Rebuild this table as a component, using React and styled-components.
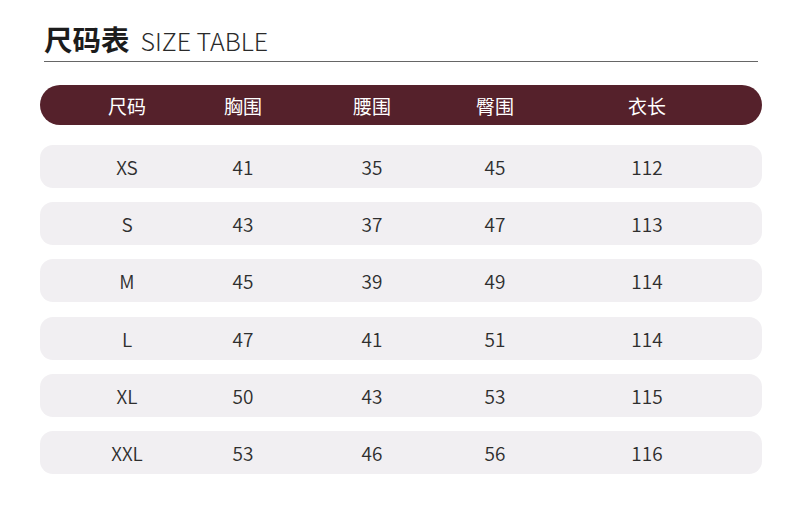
import React from "react";
import styled, { createGlobalStyle } from "styled-components";

const Global = createGlobalStyle`
  html, body { margin: 0; padding: 0; background: #ffffff; }
  body { font-family: "Noto Sans CJK SC", "Noto Sans", sans-serif; }
`;

const Page = styled.div`
  width: 790px;
  height: 516px;
  box-sizing: border-box;
  padding: 22px 28px 0 40px;
  display: flex;
  flex-direction: column;
`;

const TitleBar = styled.div`
  margin-left: 4px;
  margin-right: 4px;
  display: flex;
  align-items: baseline;
  gap: 11px;
  padding-bottom: 4px;
  border-bottom: 1px solid #666;
  line-height: 34px;
`;

const TitleCn = styled.span`
  font-size: 28.5px;
  font-weight: 700;
  color: #1c1c1c;
`;

const TitleEn = styled.span`
  font-size: 25px;
  font-weight: 300;
  color: #2a2a2a;
`;

const Grid = styled.div`
  display: grid;
  grid-template-columns: 146px 86px 172px 74px 1fr;
  align-items: center;
  justify-items: center;
  padding-left: 14px;
  box-sizing: border-box;
`;

const HeaderRow = styled(Grid)`
  margin-top: 23px;
  height: 40px;
  border-radius: 20px;
  background: #55212b;
  color: #ffffff;
  font-size: 19px;
  font-weight: 400;
`;

const Body = styled.div`
  margin-top: 20px;
  display: flex;
  flex-direction: column;
  gap: 14.2px;
`;

const DataRow = styled(Grid)`
  height: 43px;
  border-radius: 13px;
  background: #f1eff2;
  color: #2e2e2e;
  font-size: 19px;
  font-weight: 350;
`;

const Cell = styled.span`
  line-height: 1;
`;

const headers = ["尺码", "胸围", "腰围", "臀围", "衣长"];
const rows = [
  ["XS", "41", "35", "45", "112"],
  ["S", "43", "37", "47", "113"],
  ["M", "45", "39", "49", "114"],
  ["L", "47", "41", "51", "114"],
  ["XL", "50", "43", "53", "115"],
  ["XXL", "53", "46", "56", "116"],
];

export default function App() {
  return (
    <>
      <Global />
      <Page>
        <TitleBar>
          <TitleCn>尺码表</TitleCn>
          <TitleEn>SIZE TABLE</TitleEn>
        </TitleBar>
        <HeaderRow>
          {headers.map((h) => (
            <Cell key={h}>{h}</Cell>
          ))}
        </HeaderRow>
        <Body>
          {rows.map((r) => (
            <DataRow key={r[0]}>
              {r.map((c, i) => (
                <Cell key={i}>{c}</Cell>
              ))}
            </DataRow>
          ))}
        </Body>
      </Page>
    </>
  );
}
